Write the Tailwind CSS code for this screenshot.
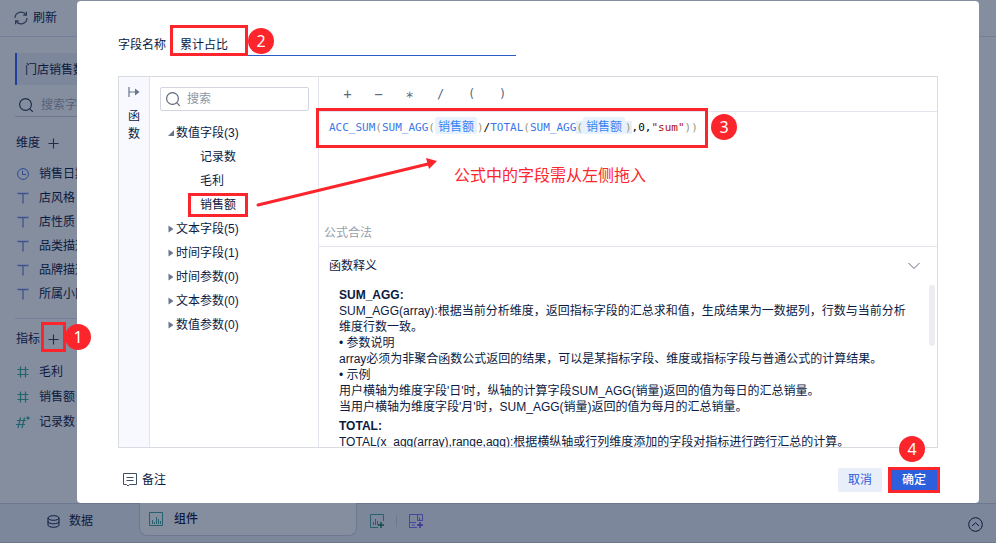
<!DOCTYPE html>
<html lang="zh-CN">
<head>
  <meta charset="UTF-8">
  <meta name="viewport" content="width=device-width, initial-scale=1">
  <title>累计占比</title>
  <script src="https://cdn.jsdelivr.net/npm/@tailwindcss/browser@4"></script>
</head>
<body class="relative flex h-screen flex-col overflow-hidden bg-[#858e9f] font-['Liberation_Sans','Noto_Sans_CJK_SC',sans-serif] text-xs leading-4 text-[#0c1a3f]">

  <!-- icons used more than once -->
  <svg class="hidden">
    <symbol id="search" viewBox="0 0 16 16" fill="none" stroke="currentColor" stroke-width="1.2"><circle cx="7.5" cy="7.5" r="5.9"/><path d="M11.8 11.8l3 3"/></symbol>
    <symbol id="plus" viewBox="0 0 12 12" fill="none" stroke="currentColor" stroke-width="1.2"><path d="M6 .5v11M.5 6h11"/></symbol>
    <symbol id="text" viewBox="0 0 12 12" fill="none" stroke="currentColor" stroke-width="1.3"><path d="M.5 1.5h11M6 1.5v10"/></symbol>
    <symbol id="hash" viewBox="0 0 12 12" fill="none" stroke="currentColor" stroke-width="1.2"><path d="M.5 3.5h11M.5 8.5h11M3.5 .5v11M8.5 .5v11"/></symbol>
    <symbol id="chart" viewBox="0 0 14 14" fill="none" stroke="currentColor"><path d="M.5 .5h13v13H.5zM3.5 8v4M5.5 10v2M7.5 5v7M9.5 7v5M11.5 9v3"/></symbol>
    <symbol id="arrow" viewBox="0 0 6 8" fill="currentColor"><path d="M.5 .5L5.5 4L.5 7.5z"/></symbol>
  </svg>

  <header class="flex h-[37px] shrink-0 items-center border-b border-[#74809a] pl-[14px]">
    <button class="flex items-center gap-[5px]">
      <svg class="size-[14px]" viewBox="0 0 14 14" fill="none" stroke="#2d3a55" stroke-width="1.2"><path d="M1 7a6 6 0 0 1 11-3.2M13 7a6 6 0 0 1-11 3.2M12.4 .8v3.4H9.2M1.6 13.2V9.8h3.2"/></svg>
      刷新
    </button>
  </header>

  <main class="min-h-0 flex-1">
    <aside class="w-48 whitespace-nowrap pl-[15px] pt-4">
      <div class="flex h-8 items-center border-l-2 border-[#1d409b] bg-[#7c879b] pl-2 pt-0.5">门店销售数据</div>
      <div class="flex h-8 items-center gap-[7px] border-b border-[#6d7890] pl-[3px] pt-2">
        <svg class="size-4 text-[#1f2d4a]"><use href="#search"/></svg>
        <input aria-label="搜索字段" placeholder="搜索字段" class="w-24 bg-transparent outline-none placeholder:text-[#56627a]">
      </div>
      <div class="mt-[17px] flex h-[18px] items-center gap-2 pl-px">
        维度
        <button aria-label="添加维度"><svg class="size-[11px] text-[#1f2d4a]"><use href="#plus"/></svg></button>
      </div>
      <ul class="mt-[10px] pl-0.5 [&>li]:flex [&>li]:h-6 [&>li]:items-center [&>li]:gap-[10px]">
        <li><svg class="size-3" viewBox="0 0 12 12" fill="none" stroke="#2b4c93"><circle cx="6" cy="6" r="5.4"/><path d="M5.5 2.5v4h3.5"/></svg>销售日期</li>
        <li><svg class="size-3 text-[#3a548f]"><use href="#text"/></svg>店风格</li>
        <li><svg class="size-3 text-[#3a548f]"><use href="#text"/></svg>店性质</li>
        <li><svg class="size-3 text-[#3a548f]"><use href="#text"/></svg>品类描述</li>
        <li><svg class="size-3 text-[#3a548f]"><use href="#text"/></svg>品牌描述</li>
        <li><svg class="size-3 text-[#3a548f]"><use href="#text"/></svg>所属小区</li>
      </ul>
      <div class="mt-3 flex h-[41px] items-center gap-2 border-t border-[#74809a] pl-px">
        指标
        <button aria-label="添加指标" class="relative">
          <svg class="size-[11px] text-[#1f2d4a]"><use href="#plus"/></svg>
          <span class="absolute -inset-x-[7px] -bottom-[7px] -top-3 border-[3px] border-[#fc252c]"></span>
        </button>
      </div>
      <ul class="pl-0.5 [&>li]:flex [&>li]:h-[25px] [&>li]:items-center [&>li]:gap-[10px]">
        <li><svg class="size-3 text-[#22656f]"><use href="#hash"/></svg>毛利</li>
        <li><svg class="size-3 text-[#22656f]"><use href="#hash"/></svg>销售额</li>
        <li><svg class="size-3 overflow-visible" viewBox="0 0 12 12" fill="none" stroke="#22656f" stroke-width="1.2"><path d="M0 4.5h9M-1 8.5h9M3.5 1.5L1 12M7.5 1.5L5 12"/><circle cx="11" cy="2" r="1" fill="#22656f"/></svg>记录数</li>
      </ul>
    </aside>
  </main>

  <footer class="flex h-10 shrink-0 border-y border-[#6c7890] bg-[#7c879b]">
    <button class="flex h-[34px] w-[139px] items-center gap-[9px] pl-[47px]">
      <svg class="size-[13px]" viewBox="0 0 13 13" fill="none" stroke="#0c1a3f"><ellipse cx="6.5" cy="3" rx="5.5" ry="2.3"/><path d="M1 3v7c0 3 11 3 11 0V3M1 6.5c0 3 11 3 11 0"/></svg>
      数据
    </button>
    <button class="-mt-px flex h-[33px] w-[218px] items-center gap-[11px] rounded-b-lg border border-t-0 border-[#6c7890] bg-[#858e9f] pl-[9px] font-medium">
      <svg class="size-[14px] text-[#28606d]"><use href="#chart"/></svg>
      组件
    </button>
    <div class="flex h-[34px] items-center pl-[13px]">
      <button aria-label="添加组件"><svg class="size-[14px]" viewBox="0 0 14 14" fill="none" stroke="#28606d"><path d="M13.5 7V.5H.5v13H8M3.5 8v3M5.5 5v6M7.5 7v4"/><path d="M11 8v6M8 11h6" stroke="#124a50" stroke-width="1.4"/></svg></button>
      <span class="mx-3 h-3 w-px bg-[#6c7890]"></span>
      <button aria-label="添加仪表板"><svg class="size-[14px]" viewBox="0 0 14 14" fill="none" stroke="#4a449f"><path d="M13.5 7V.5H.5v13H8M.5 8.5H7M8.5 .5v6M8.5 6.5h5M10.5 3.5v3M3 11h3"/><path d="M11 8v6M8 11h6" stroke="#39338f" stroke-width="1.4"/></svg></button>
    </div>
    <button aria-label="展开" class="ml-auto mr-[13px] mt-0.5 self-center"><svg class="size-[15px]" viewBox="0 0 15 15" fill="none" stroke="#0c1a3f"><circle cx="7.5" cy="7.5" r="6.8"/><path d="M4 9l3.5-3.2L11 9"/></svg></button>
  </footer>

  <!-- formula dialog -->
  <section role="dialog" aria-label="计算字段" class="absolute bottom-10 left-[77px] right-[17px] top-px flex flex-col rounded-sm bg-white px-[41px]">
    <div class="mt-8 flex h-[23px] shrink-0 items-stretch gap-[5px]">
      <label for="field-name" class="flex items-center">字段名称</label>
      <div class="relative">
        <input id="field-name" value="累计占比" class="h-full w-[345px] border-b border-[#2c5ac8] pb-px pl-[9px] outline-none">
        <span class="absolute -left-px -top-2 h-[31px] w-[78px] border-[3px] border-[#fc252c]"></span>
        <span class="absolute -top-[5px] left-[77px] flex size-[26px] items-center justify-center rounded-full bg-[#fc252c] font-['Noto_Sans'] text-base text-white">2</span>
      </div>
    </div>

    <div class="mt-5 flex min-h-0 flex-1 border border-[#d9dbe3]">
      <div class="flex w-[31px] shrink-0 flex-col items-center border-r border-[#e3e5ee] bg-[#f7f9fe] pt-[9px]">
        <button aria-label="展开函数"><svg class="size-3" viewBox="0 0 12 12" fill="none" stroke="#66758a" stroke-width="1.2"><path d="M1 1v10M1 6h7"/><path d="M7 2.5L11.5 6L7 9.5z" fill="#66758a" stroke="none"/></svg></button>
        <span class="mt-[9px] w-3 leading-[18px]">函数</span>
      </div>

      <div class="w-[169px] shrink-0 border-r border-[#e3e5ee] px-[10px] pt-[10px]">
        <div class="-mr-px flex h-6 items-center gap-1.5 rounded-xs border border-[#d3d6e0] pl-1">
          <svg class="size-4 shrink-0 text-[#5c6a7e]"><use href="#search"/></svg>
          <input aria-label="搜索" placeholder="搜索" class="min-w-0 flex-1 outline-none placeholder:text-[#8d96a5]">
        </div>
        <ul class="mt-[10px] pl-2 leading-6">
          <li>
            <div class="flex items-center gap-0.5"><svg class="size-1.5" viewBox="0 0 6 6"><path d="M6 0v6H0z" fill="#66758a"/></svg>数值字段(3)</div>
            <ul class="pl-8">
              <li>记录数</li>
              <li>毛利</li>
              <li><span class="relative">销售额<span class="absolute -inset-x-3 -inset-y-[5px] border-[3px] border-[#fc252c]"></span></span></li>
            </ul>
          </li>
          <li class="flex items-center gap-0.5"><svg class="h-2 w-1.5 text-[#66758a]"><use href="#arrow"/></svg>文本字段(5)</li>
          <li class="flex items-center gap-0.5"><svg class="h-2 w-1.5 text-[#66758a]"><use href="#arrow"/></svg>时间字段(1)</li>
          <li class="flex items-center gap-0.5"><svg class="h-2 w-1.5 text-[#66758a]"><use href="#arrow"/></svg>时间参数(0)</li>
          <li class="flex items-center gap-0.5"><svg class="h-2 w-1.5 text-[#66758a]"><use href="#arrow"/></svg>文本参数(0)</li>
          <li class="flex items-center gap-0.5"><svg class="h-2 w-1.5 text-[#66758a]"><use href="#arrow"/></svg>数值参数(0)</li>
        </ul>
      </div>

      <div class="flex min-w-0 flex-1 flex-col">
        <div class="flex h-[35px] shrink-0 items-center border-b border-[#e3e5ee] pl-[13px] font-['DejaVu_Sans_Mono',monospace] text-sm text-[#5c6a7e] [&>button]:w-[31px]">
          <button>+</button>
          <button>−</button>
          <button>∗</button>
          <button class="text-xs">/</button>
          <button class="text-xs">(</button>
          <button class="text-xs">)</button>
        </div>
        <div class="relative h-[107px] shrink-0 pl-[10px] pt-[6px]">
          <div role="textbox" aria-label="公式" class="whitespace-nowrap font-['DejaVu_Sans_Mono','Noto_Sans_CJK_SC',monospace] text-[11px] leading-4 text-[#997]"><span class="text-[#3b78e7]">ACC_SUM</span>(<span class="text-[#3b78e7]">SUM_AGG</span>(<span class="rounded-xs bg-[#e8f2fe] px-[3px] font-['Noto_Sans_CJK_SC'] text-xs text-[#3685f2]">销售额</span>)<span class="text-black">/</span><span class="text-[#3b78e7]">TOTAL</span>(<span class="text-[#3b78e7]">SUM_AGG</span><span class="bg-[#e8f1f8]">(</span><span class="rounded-xs bg-[#e8f2fe] px-[3px] font-['Noto_Sans_CJK_SC'] text-xs text-[#3685f2]">销售额</span><span class="bg-[#e8f1f8]">)</span><span class="text-black">,0,</span><span class="text-[#a11]">"sum"</span>))</div>
          <span class="absolute -left-[3px] -top-1 h-[40px] w-[392px] border-[3px] border-[#fc252c]"></span>
          <span class="absolute left-[392px] top-[2px] flex size-[26px] items-center justify-center rounded-full bg-[#fc252c] font-['Noto_Sans'] text-base text-white">3</span>
          <p class="mt-7 pl-[125px] text-base leading-6 text-[#fc252c]">公式中的字段需从左侧拖入</p>
        </div>
        <div class="flex h-[28px] shrink-0 items-center border-b border-[#e3e5ee] pl-[5px] text-[#989fab]">公式合法</div>
        <div class="flex h-[37px] shrink-0 items-center justify-between pl-[10px] pr-[17px]">
          函数释义
          <button aria-label="收起"><svg class="h-3 w-3" viewBox="0 0 12 12" fill="none" stroke="#5c6a7e"><path d="M.5 3L6 8.5L11.5 3"/></svg></button>
        </div>
        <div class="relative min-h-0 flex-1 overflow-hidden pl-5 pr-[30px] pt-[3px]">
          <h4 class="font-bold">SUM_AGG:</h4>
          <p>SUM_AGG(array):根据当前分析维度，返回指标字段的汇总求和值，生成结果为一数据列，行数与当前分析维度行数一致。</p>
          <p>• 参数说明</p>
          <p>array必须为非聚合函数公式返回的结果，可以是某指标字段、维度或指标字段与普通公式的计算结果。</p>
          <p>• 示例</p>
          <p>用户横轴为维度字段'日'时，纵轴的计算字段SUM_AGG(销量)返回的值为每日的汇总销量。</p>
          <p>当用户横轴为维度字段'月'时，SUM_AGG(销量)返回的值为每月的汇总销量。</p>
          <h4 class="mt-[3px] font-bold">TOTAL:</h4>
          <p>TOTAL(x_agg(array),range,agg):根据横纵轴或行列维度添加的字段对指标进行跨行汇总的计算。</p>
          <span class="absolute right-[2px] top-px h-[61px] w-1.5 rounded-full bg-[#ebedf2]"></span>
        </div>
      </div>
    </div>

    <div class="flex h-[55px] shrink-0 items-start justify-between pl-[5px] pt-5">
      <button class="flex h-6 items-center gap-[5px]">
        <svg class="size-[14px]" viewBox="0 0 14 14" fill="none" stroke="#3c4f63"><path d="M.5 .5h13v11H6.500L5 13L3.500 11.500H.5zM3.500 4.500h7M3.500 7.500h7"/></svg>
        备注
      </button>
      <div class="flex gap-2">
        <button class="h-6 w-11 rounded-xs bg-[#e9eefb] text-[#2d5bd8]">取消</button>
        <div class="relative">
          <button class="h-6 w-12 rounded-xs bg-[#2d5fdc] font-medium text-white">确定</button>
          <span class="absolute -inset-x-[2px] -inset-y-px border-[3px] border-[#fc252c]"></span>
          <span class="absolute -top-8 left-[9px] flex size-[26px] items-center justify-center rounded-full bg-[#fc252c] font-['Noto_Sans'] text-base text-white">4</span>
        </div>
      </div>
    </div>

    <!-- step 1 badge and drag arrow -->
    <span class="absolute -left-3 top-[323px] flex size-[26px] items-center justify-center rounded-full bg-[#fc252c] font-['Noto_Sans'] text-base text-white">1</span>
    <svg class="absolute left-[179px] top-[155px] h-[54px] w-[184px]" viewBox="0 0 184 54"><path d="M2 49L172 8" stroke="#fc252c" stroke-width="3" stroke-linecap="round"/><path d="M181 5L170 2L173 13z" fill="#fc252c"/></svg>
  </section>
</body>
</html>
